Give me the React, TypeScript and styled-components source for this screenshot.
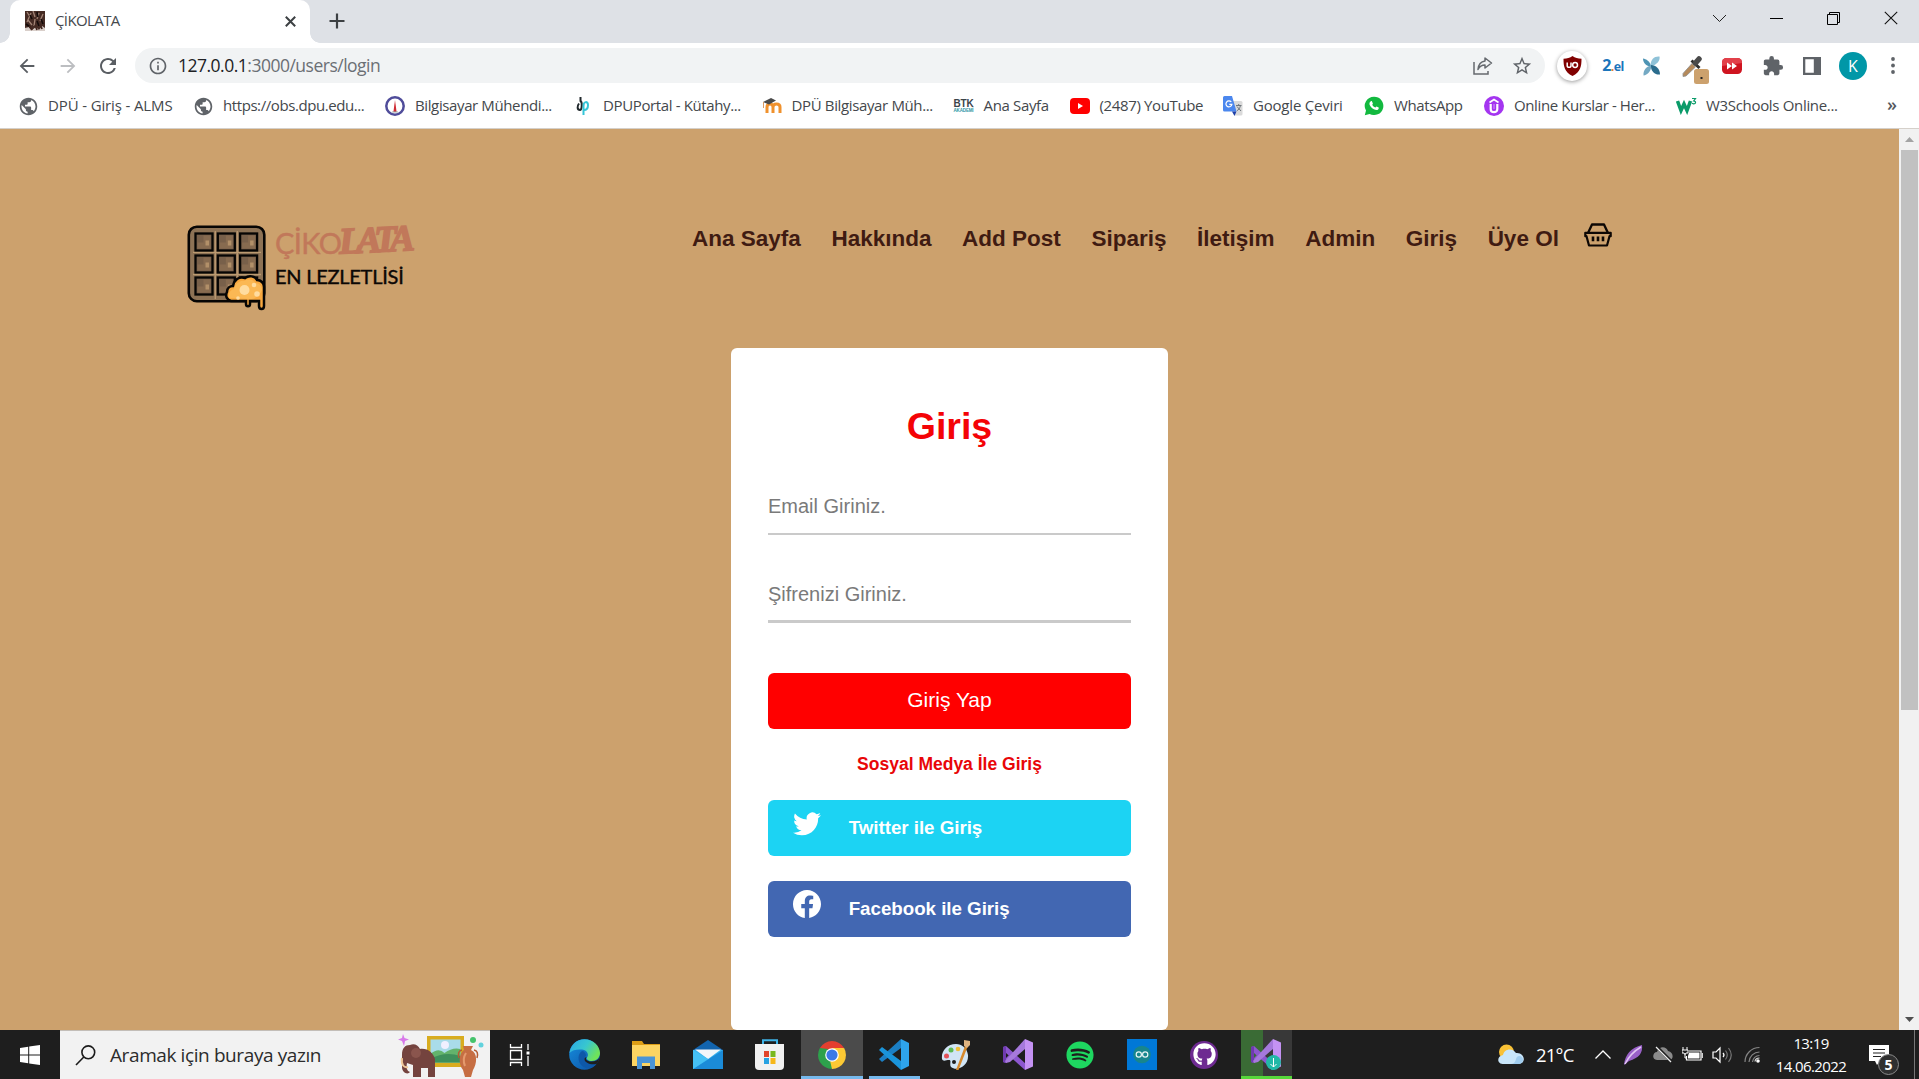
import React from 'react';
import styled, { createGlobalStyle } from 'styled-components';
import { MdArrowBack, MdArrowForward, MdRefresh, MdInfoOutline, MdStarBorder, MdExtension, MdPublic } from 'react-icons/md';
import { BsTwitter, BsFacebook } from 'react-icons/bs';
import { FaGithub, FaSpotify } from 'react-icons/fa';

const GlobalStyle = createGlobalStyle`
  * { box-sizing: border-box; }
  body { margin: 0; overflow: hidden; font-family: "Liberation Sans", Arial, sans-serif; }
  svg { display: block; flex: none; }
`;

const uiFont = '"Open Sans", "Noto Sans", sans-serif';

const Screen = styled.div`
  width: 1919px;
  height: 1079px;
  display: flex;
  flex-direction: column;
  overflow: hidden;
  background: #fff;
`;

/* ---------- Browser chrome ---------- */
const TabStrip = styled.div`
  height: 43px;
  flex: none;
  background: #dee1e6;
  display: flex;
  align-items: stretch;
  padding-left: 10px;
`;
const Tab = styled.div`
  position: relative;
  width: 300px;
  background: #fff;
  border-radius: 10px 10px 0 0;
  display: flex;
  align-items: center;
  padding: 0 14px 1px 15px;
  &::before, &::after {
    content: '';
    position: absolute;
    bottom: 0;
    width: 10px;
    height: 10px;
  }
  &::before { left: -10px; background: radial-gradient(circle at 0 0, transparent 9.5px, #fff 10px); }
  &::after { right: -10px; background: radial-gradient(circle at 100% 0, transparent 9.5px, #fff 10px); }
`;
const TabTitle = styled.span`
  font: 15px/20px ${uiFont};
  letter-spacing: -0.6px;
  color: #45494d;
  margin-left: 10px;
  margin-right: auto;
  padding-bottom: 2px;
`;
const NewTab = styled.div`
  display: flex;
  align-items: center;
  margin-left: 19px;
  padding-bottom: 1px;
`;
const WindowButtons = styled.div`
  margin-left: auto;
  display: flex;
  align-items: flex-start;
  gap: 43px;
  padding: 11px 21px 0 0;
`;

const Toolbar = styled.div`
  height: 45px;
  flex: none;
  display: flex;
  align-items: center;
  padding: 0 20px 0 16px;
`;
const NavIcon = styled.div<{ $dim?: boolean; $gap: number }>`
  color: ${p => (p.$dim ? '#bcbec1' : '#5a5e63')};
  margin-right: ${p => p.$gap}px;
`;
const AddressBar = styled.div`
  width: 1410px;
  height: 35px;
  border-radius: 18px;
  background: #f1f3f4;
  display: flex;
  align-items: center;
  padding: 0 12px 0 13px;
  color: #5f6368;
`;
const Url = styled.span`
  font: 17.5px/24px ${uiFont};
  letter-spacing: -0.5px;
  color: #6b6f74;
  margin-left: 10px;
  margin-right: auto;
  padding-bottom: 1px;
  b { font-weight: 400; color: #202124; }
`;
const Extensions = styled.div`
  display: flex;
  align-items: center;
  flex: 1;
  padding-left: 12px;
`;
const Slot = styled.div<{ $w: number; $gap?: number; $drop?: number }>`
  width: ${p => p.$w}px;
  margin-right: ${p => p.$gap ?? 0}px;
  padding-top: ${p => p.$drop ?? 0}px;
  flex: none;
  display: flex;
  justify-content: center;
  color: #5f6368;
`;
const ShieldDisc = styled.div`
  width: 30px;
  height: 30px;
  border-radius: 50%;
  background: #fff;
  box-shadow: 0 1px 4px rgba(0, 0, 0, 0.4);
  display: grid;
  place-items: center;
`;
const TwoEl = styled.span`
  font: 700 12.5px/20px "Open Sans", sans-serif;
  color: #1b75bb;
  letter-spacing: -0.6px;
  b { font-size: 16px; font-weight: 700; }
  i { font-style: normal; color: #e67a2e; }
`;
const Avatar = styled.div`
  width: 28px;
  height: 28px;
  border-radius: 50%;
  background: #0097a7;
  color: #fff;
  font: 16px/28px ${uiFont};
  text-align: center;
`;

const Bookmarks = styled.div`
  height: 41px;
  flex: none;
  display: flex;
  align-items: center;
  padding: 0 22px 4px 18px;
  border-bottom: 1px solid #d5d0ca;
`;
const Bookmark = styled.div<{ $w: number }>`
  width: ${p => p.$w}px;
  flex: none;
  display: flex;
  align-items: center;
  gap: 10px;
`;
const BookmarkIcon = styled.div`
  width: 20px;
  height: 20px;
  display: grid;
  place-items: center;
  flex: none;
`;
const BookmarkText = styled.span<{ $ls: number }>`
  font: 15px/20px ${uiFont};
  letter-spacing: ${p => p.$ls}px;
  color: #44484c;
  white-space: nowrap;
  padding-bottom: 2px;
`;
const More = styled.span`
  margin-left: auto;
  font: 600 18px/18px ${uiFont};
  color: #55595e;
  padding-bottom: 4px;
`;

/* ---------- Page ---------- */
const Viewport = styled.div`
  height: 901px;
  flex: none;
  display: flex;
`;
const Page = styled.main`
  flex: 1;
  background: #cca16d;
  display: flex;
  flex-direction: column;
  align-items: center;
`;
const Header = styled.header`
  width: 100%;
  height: 219px;
  flex: none;
  display: flex;
  justify-content: space-between;
  align-items: flex-start;
  padding: 93px 287px 0 187px;
`;
const Brand = styled.div`
  display: flex;
  gap: 8px;
  padding-top: 3px;
`;
const BrandText = styled.div`
  display: flex;
  flex-direction: column;
`;
const BrandTop = styled.div`
  height: 35px;
  display: flex;
  font: 29px/35px Lato, sans-serif;
  letter-spacing: -0.6px;
  -webkit-text-stroke: 0.4px #c1785a;
  color: #c1785a;
`;
const BrandScript = styled.span`
  font: italic 700 37px/30px "Liberation Serif", serif;
  letter-spacing: -4.9px;
  -webkit-text-stroke: 1.6px #c1785a;
  margin-left: -2px;
  transform: rotate(-3deg);
`;
const BrandSub = styled.div`
  font: 400 20px/26px Lato, sans-serif;
  letter-spacing: -0.25px;
  -webkit-text-stroke: 0.4px #0b0705;
  color: #0b0705;
  margin-top: 3px;
`;
const Menu = styled.nav`
  display: flex;
  align-items: flex-start;
  gap: 30.6px;
`;
const MenuLink = styled.a`
  font: 700 22.5px/32px "Liberation Sans", Arial, sans-serif;
  color: #3f1b12;
  white-space: nowrap;
  padding-top: 1px;
`;
const Basket = styled.div`
  margin-left: -5.5px;
`;

const Card = styled.form`
  width: 437px;
  height: 682px;
  background: #fff;
  border-radius: 6px;
  padding: 56px 37px 0;
  display: flex;
  flex-direction: column;
`;
const Title = styled.h1`
  margin: 0 0 38px;
  font: 700 37.5px/44px "Liberation Sans", Arial, sans-serif;
  color: #f40306;
  text-align: center;
`;
const Field = styled.input<{ $line: number; $base: number }>`
  width: 100%;
  height: ${p => 47 + p.$line}px;
  padding: 0 0 ${p => p.$base}px;
  margin: 0;
  border: 0;
  border-bottom: ${p => p.$line}px solid #cacaca;
  border-radius: 0;
  background: transparent;
  outline: 0;
  font: 20px/24px "Liberation Sans", Arial, sans-serif;
  &::placeholder { color: #7a7a7a; opacity: 1; }
  & + & { margin-top: 38px; }
`;
const Submit = styled.button`
  height: 56px;
  margin-top: 50px;
  padding: 0 0 2px;
  border: 0;
  border-radius: 6px;
  background: #ff0000;
  color: #fff;
  font: 21px/24px "Liberation Sans", Arial, sans-serif;
`;
const SocialTitle = styled.p`
  margin: 23px 0 0;
  font: 700 17.5px/24px "Liberation Sans", Arial, sans-serif;
  color: #e80608;
  text-align: center;
`;
const SocialButton = styled.a<{ $bg: string; $top: number }>`
  height: 56px;
  flex: none;
  margin-top: ${p => p.$top}px;
  border-radius: 6px;
  background: ${p => p.$bg};
  color: #fff;
  display: flex;
  align-items: flex-start;
  padding: 9px 25px 0;
  gap: 27.7px;
  font: 700 18.75px/38px "Liberation Sans", Arial, sans-serif;
  letter-spacing: -0.03px;
`;

const Scrollbar = styled.div`
  width: 20px;
  flex: none;
  background: #f1f1f1;
  display: flex;
  flex-direction: column;
  align-items: center;
`;
const Thumb = styled.div`
  width: 17px;
  height: 560px;
  background: #c1c1c1;
  margin-bottom: auto;
`;
const ScrollArrow = styled.div`
  height: 21px;
  display: grid;
  place-items: center;
`;

/* ---------- Taskbar ---------- */
const Taskbar = styled.footer`
  height: 49px;
  flex: none;
  background: #1e1e1e;
  display: flex;
`;
const Start = styled.div`
  width: 60px;
  display: grid;
  place-items: center;
`;
const Search = styled.div`
  width: 430px;
  background: #f2f2f2;
  border-top: 1px solid #c3beb8;
  display: flex;
  align-items: center;
  padding: 0 6px 0 15px;
`;
const SearchText = styled.span`
  font: 19px/26px ${uiFont};
  letter-spacing: -0.4px;
  color: #2c2c2c;
  margin-left: 14px;
  margin-right: auto;
`;
const TaskView = styled.div`
  width: 63px;
  display: grid;
  place-items: center;
  padding-right: 4px;
`;
const TaskApp = styled.div<{ $bg?: string; $line?: string; $w?: number }>`
  width: ${p => p.$w ?? 62}px;
  margin: 0 ${p => (62 - (p.$w ?? 62)) / 2}px;
  flex: none;
  display: grid;
  place-items: center;
  background: ${p => p.$bg ?? 'transparent'};
  box-shadow: ${p => (p.$line ? `inset 0 -3px ${p.$line}` : 'none')};
`;
const Tray = styled.div`
  margin-left: auto;
  display: flex;
  align-items: center;
`;
const Temp = styled.span`
  width: 51px;
  margin-left: 12px;
  margin-right: 8px;
  font: 18.5px/24px ${uiFont};
  letter-spacing: -0.8px;
  color: #fff;
`;
const Clock = styled.div`
  width: 84px;
  margin-left: 8px;
  font: 15px/23px ${uiFont};
  letter-spacing: -0.6px;
  color: #fff;
  text-align: center;
`;
const Notice = styled.div`
  position: relative;
  width: 20px;
  height: 49px;
  padding-top: 15px;
  margin: 0 25px 0 16px;
`;
const Count = styled.div`
  position: absolute;
  left: 9px;
  top: 24px;
  width: 21px;
  height: 21px;
  border: 1px solid #8a8a8a;
  border-radius: 50%;
  background: #303030;
  color: #fff;
  font: 700 14px/19px ${uiFont};
  text-align: center;
`;
const PeekEdge = styled.div`
  width: 5px;
  height: 49px;
  border-left: 1px solid #777;
`;

/* ---------- Drawings ---------- */
const ChocoFavicon = () => (
  <svg width="20" height="20" viewBox="0 0 20 20">
    <rect width="20" height="20" fill="#452b24" />
    <path d="M2 1l3 5M8 0l2 6M14 2l-2 6M18 3l-3 7M3 9l4 5M10 8l-1 7M6 2l-4 9" stroke="#a28476" strokeWidth="1.3" />
    <path d="M5 4l2 4M12 1l1 5M16 8l2 5M12 10l2 5M1 13l4 3" stroke="#130b0a" strokeWidth="1.6" />
    <path d="M0 17l4-1 3 3 4-3 3 3 3-4 3 2v3H0z" fill="#d9cfca" />
    <path d="M4 15l3 4M10 14l2 5M15 13l2 5" stroke="#41261f" strokeWidth="1.8" />
  </svg>
);
const Cross = ({ size, width, color }: { size: number; width: number; color: string }) => (
  <svg width={size} height={size} viewBox={`0 0 ${size} ${size}`}>
    <path d={`M.8.8L${size - 0.8} ${size - 0.8}M${size - 0.8}.8L.8 ${size - 0.8}`} stroke={color} strokeWidth={width} />
  </svg>
);
const Waffle = () => (
  <svg width="80" height="87" viewBox="0 0 80 87">
    <rect x="1.800" y="1.700" width="75.500" height="74.500" rx="8" fill="#8d7255" stroke="#060504" strokeWidth="2.600" />
    <g stroke="#bb9a70" strokeWidth="1.300">
      <path d="M28.300 6v68M50.300 6v68M6 27.400h68M6 49.500h68" />
    </g>
    {[0, 1, 2].map(r => [0, 1, 2].map(c => (
      <g key={`${r}${c}`} transform={`translate(${8.5 + c * 22.3} ${8.5 + r * 22})`}>
        <rect width="17" height="17" fill="#78604a" stroke="#060504" strokeWidth="2.300" />
        <path d="M2 15h13V2H8v7H2z" fill="#876b50" />
        <path d="M10 7h3.500v5H10z" fill="#b29069" />
      </g>
    )))}
    <path d="M44 76c-4-1-6-5-4-9 0-4 3-6 6-6 1-6 6-10 12-8 4-3 10-2 12 2 4 0 7 3 7 7v19c0 4-5 4-5 0v-5H63v3c0 3-4 3-4 0v-3z" fill="#f8a83f" stroke="#060504" strokeWidth="2.500" />
    <path d="M42 73c-1-4 1-8 5-9 1-5 6-9 10-8 5-3 10-1 11 2 5 0 7 4 7 7-2 5-6 9-12 9z" fill="#fbb854" />
    <circle cx="57.500" cy="65" r="5" fill="#ffdca0" /><circle cx="67" cy="60" r="2.300" fill="#ffdca0" />
    <circle cx="70" cy="69" r="2.800" fill="#ffdca0" /><circle cx="51" cy="73" r="1.800" fill="#ffdca0" />
  </svg>
);
const BasketIcon = () => (
  <svg width="28" height="26" viewBox="0 0 28 26" fill="none" stroke="#0d0704" strokeLinejoin="round">
    <path d="M4 11L8 2.500h12L24 11" strokeWidth="2.300" />
    <path d="M1.300 10.800h25.400v3.400h-1.200L23 23.500H5L2.500 14.200H1.300z" strokeWidth="2.200" />
    <path d="M9 14.500v4.800M14 14.500v4.800M19 14.500v4.800" strokeWidth="2.600" />
  </svg>
);
const Globe = () => <MdPublic size={21} color="#5f6368" />;
const Seal = () => (
  <svg width="20" height="20" viewBox="0 0 20 20">
    <circle cx="10" cy="10" r="8.700" fill="#fff" stroke="#4f4c9a" strokeWidth="2.500" />
    <path d="M10 4l1.600 12H8.400z" fill="#cf2b33" /><path d="M7 16h6" stroke="#9aa" strokeWidth="1" />
  </svg>
);
const Portal = () => (
  <svg width="14" height="20" viewBox="0 0 14 20" fill="none">
    <path d="M4.500 1v4c2 1 1.500 9-.5 9-3 0-3-4-1-6.500" stroke="#20282c" strokeWidth="2" />
    <path d="M7.500 19v-9c0-5 4.500-5 4.500-1 0 3-1.500 5-4 5" stroke="#35c5d8" strokeWidth="2" />
  </svg>
);
const Moodle = () => (
  <svg width="20" height="20" viewBox="0 0 20 20" fill="none">
    <path d="M5 17V11c0-4 6-4 6 0v6M11 11c0-4 7-4 7 0v6" stroke="#f0912d" strokeWidth="3" />
    <path d="M1 6l8-4 5 2.500-7 4z" fill="#4a4a4a" /><path d="M1.500 6v6" stroke="#d99a63" />
  </svg>
);
const BtkMark = styled.div`
  display: flex;
  flex-direction: column;
  align-items: center;
  width: 20px;
  font: 700 10px/9px "Liberation Sans", sans-serif;
  letter-spacing: -0.2px;
  color: #3b444a;
  small { font-size: 4.5px; line-height: 5px; color: #2f96a5; letter-spacing: -0.15px; }
`;
const YouTube = () => (
  <svg width="20" height="18" viewBox="0 0 20 18"><rect y="1" width="20" height="16" rx="4" fill="#f00" /><path d="M8 6l5 3-5 3z" fill="#fff" /></svg>
);
const Translate = () => (
  <svg width="20" height="20" viewBox="0 0 20 20">
    <path d="M8 5h10a1.500 1.500 0 011.500 1.500V18a1.500 1.500 0 01-1.500 1.500h-6z" fill="#dadada" />
    <path d="M1.500 0H9l4.500 15.500H1.500A1.500 1.500 0 010 14V1.500A1.500 1.500 0 011.500 0z" fill="#4b87ee" />
    <path d="M9 15.500h4.500L11.500 20z" fill="#1d3fa8" />
    <path d="M8.300 6a3 3 0 10.600 2.400H6.300" stroke="#fff" strokeWidth="1.200" fill="none" />
    <path d="M13 9.500h5.500M15.700 8v1.500M17.500 9.500c-.6 3-2.500 4.500-3.500 5.300M14 10.500l4 4.500" stroke="#70777d" fill="none" />
  </svg>
);
const WhatsBubble = () => (
  <svg width="20" height="20" viewBox="0 0 20 20">
    <path d="M10 .7a9.200 9.200 0 00-8 13.800L.8 19.200l4.800-1.300A9.200 9.200 0 1010 .7z" fill="#12b93f" />
    <path d="M6.800 5.200c.5-.3 1-.2 1.200.2l.9 2c.1.400-.7 1.300-.6 1.500.6 1.200 1.600 2.100 2.900 2.700.3 0 1-1.200 1.400-1.100l2 1c.5.300.1 1.400-.5 1.900-1 .8-2.500.6-4.200-.2-1.800-.9-3.400-2.500-4.200-4.300-.6-1.400-.1-3 1.100-3.700z" fill="#fff" />
  </svg>
);
const Udemy = () => (
  <svg width="20" height="20" viewBox="0 0 20 20" fill="none">
    <circle cx="10" cy="10" r="10" fill="#a435f0" />
    <path d="M5.500 6.500L10 3.500l4.500 3" stroke="#fff" strokeWidth="1.700" />
    <path d="M6.700 8v5.200c0 4 6.600 4 6.600 0V8" stroke="#fff" strokeWidth="2.200" /><path d="M10 8v5" stroke="#d79bfa" />
  </svg>
);
const W3 = () => (
  <svg width="21" height="18" viewBox="0 0 21 18" fill="none" stroke="#0a9b69">
    <path d="M1.500 4l3.500 9.500L8 7l3 6.500L14.500 4" strokeWidth="3.500" />
    <path d="M16 1.500h3.500L17.700 4c2.600 0 2.400 3-.2 2.800l-1.500-.5" strokeWidth="1.200" />
  </svg>
);
const ShareIcon = () => (
  <svg width="20" height="18" viewBox="0 0 20 18" fill="none" stroke="#65696e" strokeWidth="1.500">
    <path d="M1 5v12h14v-3" /><path d="M12 1l6.500 5-6.500 5V8C8.500 8 6.500 9.500 5 12.500 5.500 7 8 4.500 12 4z" strokeLinejoin="round" />
  </svg>
);
const Shield = () => (
  <svg width="19" height="20" viewBox="0 0 19 20">
    <path d="M9.500 0C12 2 15 2.700 18.500 2.700c0 8-1 13-9 17.300-8-4.300-9-9.300-9-17.300C4 2.700 7 2 9.500 0z" fill="#800000" />
    <path d="M4.200 6.500v3.200c0 2.200 3.800 2.200 3.800 0V6.500" fill="none" stroke="#fff" strokeWidth="1.500" />
    <circle cx="12.100" cy="9" r="2.400" fill="none" stroke="#fff" strokeWidth="1.500" />
  </svg>
);
const Petals = () => (
  <svg width="19" height="20" viewBox="0 0 19 20">
    <path d="M9.500 11C8 5 4 3 1 2.500c0 4 3 7.500 8 8.500z" fill="#4e94b4" /><path d="M8.500 10c0-7 4-10 9-9.500 1 4-3 8.500-8 9.500z" fill="#8fc2d8" />
    <path d="M9 9.500c-5 1-8 5-7.500 10 4-.5 7-4 8-9z" fill="#74a9c3" /><path d="M9 9c5 0 9 4 9 9.500-5 .5-9-3-9-8z" fill="#2b6c8d" />
  </svg>
);
const Dropper = () => (
  <svg width="27" height="29" viewBox="0 0 27 29">
    <path d="M1 18.500l9-10 3.500 3.500-9.500 9-3 .5z" fill="#b58a5b" stroke="#8f8f8f" strokeWidth=".8" />
    <path d="M9.500 5.500l8 7.500" stroke="#2e2e2e" strokeWidth="3" /><path d="M13.500 8L17 4" stroke="#4a4a4a" strokeWidth="5.500" strokeLinecap="round" />
    <rect x="12" y="14" width="15" height="15" rx="2.500" fill="#cca16d" /><rect x="18.500" y="22" width="2" height="2" fill="#222" />
  </svg>
);
const FastForward = () => (
  <svg width="20" height="16" viewBox="0 0 20 16"><rect width="20" height="16" rx="4.500" fill="#cf1420" /><path d="M0 5q0-5 5-5h10q5 0 5 5l-20 3z" fill="#e2404a" /><path d="M5 4.500l5 3.500-5 3.500zM10 4.500l5 3.500-5 3.500z" fill="#fff" /></svg>
);
const SidePanel = () => (
  <svg width="18" height="18" viewBox="0 0 18 18"><path fillRule="evenodd" d="M0 0h18v18H0zM2.300 2.300v13.400h8.500V2.300z" fill="#5f6368" /></svg>
);
const Dots = () => (
  <svg width="4" height="17" viewBox="0 0 4 17" fill="#5f6368"><circle cx="2" cy="2" r="1.900" /><circle cx="2" cy="8.500" r="1.900" /><circle cx="2" cy="15" r="1.900" /></svg>
);
const WinLogo = () => (
  <svg width="20" height="20" viewBox="0 0 20 20" fill="#fff"><path d="M0 3l8.200-1.200v7.700H0zM9.200 1.600L20 0v9.500H9.200zM0 10.500h8.200v7.700L0 17zM9.200 10.500H20V20L9.200 18.400z" /></svg>
);
const Magnifier = () => (
  <svg width="21" height="21" viewBox="0 0 21 21" fill="none" stroke="#1b1b1b" strokeWidth="1.600"><circle cx="13.300" cy="7.300" r="6.400" /><path d="M8.800 12L1 20" /></svg>
);
const Museum = () => (
  <svg width="86" height="46" viewBox="0 0 86 46">
    <path d="M5 2l1.500 4L11 7.500 7 9l-1 5-2-5-4-1.500L4 6z" fill="#d879ea" />
    <circle cx="75" cy="8" r="3" fill="#45c36b" /><circle cx="83" cy="13" r="2.500" fill="#62d2dd" />
    <rect x="29" y="4" width="37" height="31" fill="#d8ac1f" /><rect x="32.500" y="7.500" width="30" height="23" fill="#a9dcea" />
    <path d="M32.500 22q8-7 14-1 8-6 16-4v13.500h-30z" fill="#63b36c" /><path d="M32.500 27q14-8 30-3v6.500h-30z" fill="#3e8f5b" />
    <circle cx="47" cy="13" r="4" fill="#f1f0ff" />
    <path d="M4 23c0-7 3-10 8-10 4-2 8 0 10 4 8-1 13 4 15 10v18h-7v-9h-7v9h-8V33l-6-2c-1 5 0 8 3 9-2 3-8 1-8-5z" fill="#74433e" />
    <circle cx="18" cy="21" r="5" fill="#8a554d" /><path d="M4 26c-1 7 2 10 6 9" fill="none" stroke="#f1c99a" strokeWidth="2" />
    <path d="M65 14h10l-2 4c7 3 6 14 2 20l-2 7h-6l-2-7c-5-6-4-17 1-20z" fill="#c66e43" /><path d="M64 18q-5 1-3 8M76 18q5 1 3 8" fill="none" stroke="#b45c33" strokeWidth="1.500" />
    <path d="M68 21q-4 6-1 13" stroke="#e59a6d" strokeWidth="2" fill="none" />
  </svg>
);
const TaskViewIcon = () => (
  <svg width="22" height="22" viewBox="0 0 22 22" fill="none" stroke="#fff" strokeWidth="1.300"><path d="M1.500 0v3.500h11V0M1.500 22v-3.500h11V22M1.500 6.500h11v9h-11zM19 0v6M19 12v10" /><path d="M17.500 7.500h3v3h-3z" fill="#fff" stroke="none" /></svg>
);
const Edge = () => (
  <svg width="31" height="31" viewBox="0 0 31 31">
    <defs>
      <linearGradient id="edgeTop" x1="0" y1="0" x2="1" y2=".5"><stop offset="0" stopColor="#2aa6e6" /><stop offset=".55" stopColor="#38c7cf" /><stop offset="1" stopColor="#6fe35a" /></linearGradient>
      <linearGradient id="edgeBottom" x1="0" y1="0" x2="1" y2="1"><stop offset="0" stopColor="#168fe0" /><stop offset="1" stopColor="#0c4fa0" /></linearGradient>
    </defs>
    <circle cx="15.500" cy="15.500" r="15.300" fill="url(#edgeBottom)" />
    <path d="M.5 14C2 5 8 .2 15.500.2 24 .2 31 7 31 14c0 5-4 8-8 8-4 0-6-2-5-3.500 2-2 1-7.500-5-8C8 10 3 11 .5 14z" fill="url(#edgeTop)" />
    <path d="M13 12c-6 4-4 15 4 17 5 1 9-2 11-5-4 2-10 2-12-3-1-2 0-3 1-4 0-3-2-5-4-5z" fill="#0e58a8" />
    <path d="M17.500 18c-1.500 2 0 4.500 5 4.500 4 0 6.500-1.500 8-4-1 3-1 5-3 6.500-6 1-12-1-12-5 0-1 1-2 2-2z" fill="#1e1e1e" />
  </svg>
);
const Folder = () => (
  <svg width="30" height="28" viewBox="0 0 30 28"><path d="M1 0h10l2 3h16v7H1z" fill="#dc9d16" /><path d="M1 4h28v21H1z" fill="#fcd462" /><path d="M6 28V15.500h18V28h-5v-6h-8v6z" fill="#4a94d6" /></svg>
);
const Mail = () => (
  <svg width="30" height="30" viewBox="0 0 30 30"><path d="M0 10L15 0l15 10z" fill="#1264ae" /><path d="M0 10h30v19H0z" fill="#38b1ed" /><path d="M0 29L30 10v19z" fill="#1b8bd8" /><path d="M2 9.500h26L15 19z" fill="#f3f6f9" /><path d="M0 10l15 9-15 10z" fill="#45c0f4" /></svg>
);
const Store = () => (
  <svg width="30" height="31" viewBox="0 0 30 31"><path d="M8 6V1.200h14V6" fill="none" stroke="#3fb2e6" strokeWidth="2" /><path d="M0 5h29v22q0 4-4 4H4q-4 0-4-4z" fill="#f1f1f1" /><path d="M9 12h5v6H9z" fill="#e2452b" /><path d="M15.500 12h5v6h-5z" fill="#78b81e" /><path d="M9 19h5v6H9z" fill="#27a2e2" /><path d="M15.500 19h5v6h-5z" fill="#f6b71a" /></svg>
);
const Chrome = () => (
  <svg width="28" height="28" viewBox="0 0 28 28"><path d="M14 14L1.900 7A14 14 0 0126.100 7z" fill="#e43e2f" /><path d="M14 14L26.100 7A14 14 0 0114 28z" fill="#fcc934" /><path d="M14 14v14A14 14 0 011.900 7z" fill="#2da14c" /><path d="M14 7h12.100L20 17.500z" fill="#fcc934" /><path d="M14 28l6.200-10.500-8 3z" fill="#fcc934" /><path d="M8 17.500L1.900 7l8 1z" fill="#2da14c" /><circle cx="14" cy="14" r="6.800" fill="#fff" /><circle cx="14" cy="14" r="5.600" fill="#3b78e7" /></svg>
);
const VsCode = () => (
  <svg width="30" height="31" viewBox="0 0 30 31"><path d="M22 0l8 4v23l-8 4z" fill="#2ea4ec" /><path d="M22 0L0 20l3 3L22 9z" fill="#1b7fc4" /><path d="M22 31L0 11l3-3 19 14z" fill="#1a94da" /></svg>
);
const Paint = () => (
  <svg width="30" height="31" viewBox="0 0 30 31"><path d="M15 5C6 5 0 12 1 20c1 3 4 1 7 1 3 0 0 4 2 7 6 5 18-1 17-12C26 9 21 5 15 5z" fill="#d1e5f5" /><circle cx="5.500" cy="17" r="2.500" fill="#e2525a" /><circle cx="10" cy="11" r="2.500" fill="#5cb955" /><circle cx="17" cy="10" r="2.300" fill="#f0be37" /><circle cx="13" cy="23" r="2" fill="#1e1e1e" /><path d="M15 31l9-24 2.500 1-9 23z" fill="#d6892d" /><path d="M23 7l0-6 6 1 0 4-3 3z" fill="#dfb381" /></svg>
);
const VisualStudio = () => (
  <svg width="30" height="31" viewBox="0 0 30 31"><path d="M0 8l3-1 20 18-1 6L3 14v5l3-3 3 2-6 6-3-1z" fill="#8c57cf" /><path d="M0 8l3-1v17l-3-1z" fill="#6f3bb0" /><path d="M22 0v10L7 23l-4 1-1-2z" fill="#a679dc" /><path d="M22 0l8 3.500v24L22 31z" fill="#c492f3" /></svg>
);
const Arduino = () => (
  <svg width="30" height="31" viewBox="0 0 30 31" fill="none"><rect width="30" height="31" fill="#0078d7" /><circle cx="15" cy="15.500" r="8.800" fill="#17868d" /><circle cx="11.800" cy="15.500" r="2.600" stroke="#e8f5f5" strokeWidth="1.200" /><circle cx="18.200" cy="15.500" r="2.600" stroke="#e8f5f5" strokeWidth="1.200" /></svg>
);
const Disc = styled.div<{ $bg: string }>`
  width: 28px;
  height: 28px;
  border-radius: 50%;
  background: ${p => p.$bg};
  display: grid;
  place-items: center;
`;
const Installer = styled.div`
  position: relative;
`;
const DownBadge = styled.div`
  position: absolute;
  right: 0;
  bottom: 0;
  width: 15px;
  height: 15px;
  border-radius: 50%;
  background: #22b8a7;
  display: grid;
  place-items: center;
`;
const Weather = () => (
  <svg width="26" height="21" viewBox="0 0 26 21"><circle cx="8.500" cy="8" r="7.500" fill="#f9c135" /><path d="M6 20c-8 0-7-8-1-9 1-6 9-8 13-2 9-1 11 11 2 11z" fill="#c9e6fa" /><path d="M13 20c7-1 3-7 8-8 5 0 6 8-1 8z" fill="#a1cdef" /></svg>
);
const Feather = () => (
  <svg width="19" height="20" viewBox="0 0 19 20"><path d="M0 20C1 9 7 3 18 0c1 8-3 13-13 16z" fill="#9960c7" /><path d="M1 19C5 11 10 6 17 2" stroke="#e0c5f2" strokeWidth="1.500" fill="none" /></svg>
);
const CloudOff = () => (
  <svg width="20" height="17" viewBox="0 0 20 17"><path d="M4 14C-2 13 0 6 4 6c2-6 9-6 11-1 6 1 6 9 1 9z" fill="#8b8b8b" /><path d="M3 0l16 16" stroke="#1e1e1e" strokeWidth="3" /><path d="M3 1l15 15" stroke="#f0f0f0" strokeWidth="1.300" /></svg>
);
const Battery = () => (
  <svg width="21" height="15" viewBox="0 0 21 15"><path d="M7 4h12v9H4.500V9" fill="none" stroke="#fff" strokeWidth="1.200" /><path d="M7 5.500h10.500v6H6V9z" fill="#fff" /><path d="M20.300 6v5" stroke="#fff" /><path d="M1 0v3M5 0v3M0 3h6v3H4L3 7.500 2 6H0zM3 7v4h2" stroke="#fff" fill="none" /></svg>
);
const Speaker = () => (
  <svg width="21" height="18" viewBox="0 0 21 18" fill="none" stroke="#fff" strokeWidth="1.200"><path d="M1 6h3l4-4v14l-4-4H1z" /><path d="M11 7q2 2 0 4" /><path d="M13.500 4.500q3.500 4.500 0 9M16.500 2q5.500 7 0 14" stroke="#777" /></svg>
);
const Wifi = () => (
  <svg width="17" height="17" viewBox="0 0 17 17" fill="none" stroke="#858585" strokeWidth="1.200"><path d="M1 16A14.500 14.500 0 0115.500 1.500M5 16A10.500 10.500 0 0115.500 6M8.500 16a7 7 0 017-6.500" /><path d="M11 15.500c.2-2 2-3.500 4.500-3.500" stroke="#ddd" /><circle cx="14" cy="15" r="1.800" fill="#fff" stroke="none" /></svg>
);

const bookmarks: { icon: React.ReactNode; text: string; w: number; ls: number }[] = [
  { icon: <Globe />, text: 'DPÜ - Giriş - ALMS', w: 175, ls: -0.13 },
  { icon: <Globe />, text: 'https://obs.dpu.edu...', w: 192, ls: -0.42 },
  { icon: <Seal />, text: 'Bilgisayar Mühendi...', w: 188, ls: -0.38 },
  { icon: <Portal />, text: 'DPUPortal - Kütahy...', w: 188.5, ls: -0.37 },
  { icon: <Moodle />, text: 'DPÜ Bilgisayar Müh...', w: 192, ls: -0.36 },
  { icon: <BtkMark>BTK<small>AKADEMİ</small></BtkMark>, text: 'Ana Sayfa', w: 116, ls: -0.35 },
  { icon: <YouTube />, text: '(2487) YouTube', w: 153.5, ls: -0.36 },
  { icon: <Translate />, text: 'Google Çeviri', w: 141, ls: -0.2 },
  { icon: <WhatsBubble />, text: 'WhatsApp', w: 120, ls: -0.39 },
  { icon: <Udemy />, text: 'Online Kurslar - Her...', w: 192, ls: -0.39 },
  { icon: <W3 />, text: 'W3Schools Online...', w: 170, ls: -0.32 },
];
const menu = ['Ana Sayfa', 'Hakkında', 'Add Post', 'Sipariş', 'İletişim', 'Admin', 'Giriş', 'Üye Ol'];

export default function App() {
  return (
    <Screen>
      <GlobalStyle />
      <TabStrip>
        <Tab>
          <ChocoFavicon />
          <TabTitle>ÇİKOLATA</TabTitle>
          <Cross size={11} width={2} color="#3c4043" />
        </Tab>
        <NewTab>
          <svg width="16" height="16" viewBox="0 0 16 16"><path d="M8 .5v15M.5 8h15" stroke="#3c4043" strokeWidth="2.200" /></svg>
        </NewTab>
        <WindowButtons>
          <svg width="15" height="14" viewBox="0 0 15 14"><path d="M1 4l6.500 6.500L14 4" fill="none" stroke="#222" /></svg>
          <svg width="14" height="14" viewBox="0 0 14 14"><path d="M0 7.500h13" stroke="#000" /></svg>
          <svg width="14" height="14" viewBox="0 0 14 14" fill="none" stroke="#000"><path d="M.5 3.500h10v10H.500zM2.500 3V1.500h10v10H11" /></svg>
          <Cross size={14} width={1.1} color="#111" />
        </WindowButtons>
      </TabStrip>
      <Toolbar>
        <NavIcon $gap={19}><MdArrowBack size={22} /></NavIcon>
        <NavIcon $gap={17} $dim><MdArrowForward size={22} /></NavIcon>
        <NavIcon $gap={15}><MdRefresh size={24} /></NavIcon>
        <AddressBar>
          <MdInfoOutline size={20} />
          <Url><b>127.0.0.1</b>:3000/users/login</Url>
          <Slot $w={20} $gap={18}><ShareIcon /></Slot>
          <Slot $w={22}><MdStarBorder size={22} /></Slot>
        </AddressBar>
        <Extensions>
          <Slot $w={30} $gap={14}><ShieldDisc><Shield /></ShieldDisc></Slot>
          <Slot $w={24} $gap={17}><TwoEl><b>2</b><i>.</i>el</TwoEl></Slot>
          <Slot $w={19} $gap={21}><Petals /></Slot>
          <Slot $w={27} $gap={13} $drop={7}><Dropper /></Slot>
          <Slot $w={20} $gap={19}><FastForward /></Slot>
          <Slot $w={23} $gap={19}><MdExtension size={22} /></Slot>
          <Slot $w={18} $gap={18}><SidePanel /></Slot>
          <Slot $w={28} $gap={24}><Avatar>K</Avatar></Slot>
          <Slot $w={4}><Dots /></Slot>
        </Extensions>
      </Toolbar>
      <Bookmarks>
        {bookmarks.map(b => (
          <Bookmark key={b.text} $w={b.w}>
            <BookmarkIcon>{b.icon}</BookmarkIcon>
            <BookmarkText $ls={b.ls}>{b.text}</BookmarkText>
          </Bookmark>
        ))}
        <More>»</More>
      </Bookmarks>

      <Viewport>
        <Page>
          <Header>
            <Brand>
              <Waffle />
              <BrandText>
                <BrandTop>ÇİKO<BrandScript>LATA</BrandScript></BrandTop>
                <BrandSub>EN LEZLETLİSİ</BrandSub>
              </BrandText>
            </Brand>
            <Menu>
              {menu.map(m => <MenuLink key={m}>{m}</MenuLink>)}
              <Basket><BasketIcon /></Basket>
            </Menu>
          </Header>
          <Card>
            <Title>Giriş</Title>
            <Field $line={2} $base={7} placeholder="Email Giriniz." />
            <Field $line={3} $base={5} type="password" placeholder="Şifrenizi Giriniz." />
            <Submit type="button">Giriş Yap</Submit>
            <SocialTitle>Sosyal Medya İle Giriş</SocialTitle>
            <SocialButton $bg="#1cd3f3" $top={24}><BsTwitter size={28} />Twitter ile Giriş</SocialButton>
            <SocialButton $bg="#4267b2" $top={25}><BsFacebook size={28} />Facebook ile Giriş</SocialButton>
          </Card>
        </Page>
        <Scrollbar>
          <ScrollArrow><svg width="9" height="5" viewBox="0 0 9 5"><path d="M0 5l4.500-5L9 5z" fill="#a3a3a3" /></svg></ScrollArrow>
          <Thumb />
          <ScrollArrow><svg width="9" height="5" viewBox="0 0 9 5"><path d="M0 0l4.500 5L9 0z" fill="#505050" /></svg></ScrollArrow>
        </Scrollbar>
      </Viewport>

      <Taskbar>
        <Start><WinLogo /></Start>
        <Search>
          <Magnifier />
          <SearchText>Aramak için buraya yazın</SearchText>
          <Museum />
        </Search>
        <TaskView><TaskViewIcon /></TaskView>
        <TaskApp><Edge /></TaskApp>
        <TaskApp><Folder /></TaskApp>
        <TaskApp><Mail /></TaskApp>
        <TaskApp><Store /></TaskApp>
        <TaskApp $bg="#4b4b4b" $line="#76b9ed"><Chrome /></TaskApp>
        <TaskApp $w={51} $line="#76b9ed"><VsCode /></TaskApp>
        <TaskApp><Paint /></TaskApp>
        <TaskApp><VisualStudio /></TaskApp>
        <TaskApp><FaSpotify size={28} color="#1ed760" /></TaskApp>
        <TaskApp><Arduino /></TaskApp>
        <TaskApp><Disc $bg="#6e2a91"><FaGithub size={23} color="#fff" /></Disc></TaskApp>
        <TaskApp $w={51} $bg="linear-gradient(90deg, #3a6b35 22px, #383838 22px)" $line="#56d83a">
          <Installer>
            <VisualStudio />
            <DownBadge><svg width="7" height="10" viewBox="0 0 7 10"><path d="M3.500 0v9M.5 6l3 3 3-3" fill="none" stroke="#fff" /></svg></DownBadge>
          </Installer>
        </TaskApp>
        <Tray>
          <Weather />
          <Temp>21°C</Temp>
          <Slot $w={16} $gap={13}><svg width="16" height="9" viewBox="0 0 16 9"><path d="M.5 8.500L8 1l7.500 7.500" fill="none" stroke="#fff" strokeWidth="1.300" /></svg></Slot>
          <Slot $w={19} $gap={10}><Feather /></Slot>
          <Slot $w={20} $gap={9}><CloudOff /></Slot>
          <Slot $w={21} $gap={9}><Battery /></Slot>
          <Slot $w={21} $gap={11}><Speaker /></Slot>
          <Slot $w={17}><Wifi /></Slot>
          <Clock>13:19<br />14.06.2022</Clock>
          <Notice>
            <svg width="20" height="20" viewBox="0 0 20 20"><path d="M0 0h20v16h-9l-3 4-2-4H0z" fill="#fff" /><path d="M4 4.500h12M4 8h12M4 11.500h8" stroke="#222" strokeWidth="1.200" /></svg>
            <Count>5</Count>
          </Notice>
          <PeekEdge />
        </Tray>
      </Taskbar>
    </Screen>
  );
}
